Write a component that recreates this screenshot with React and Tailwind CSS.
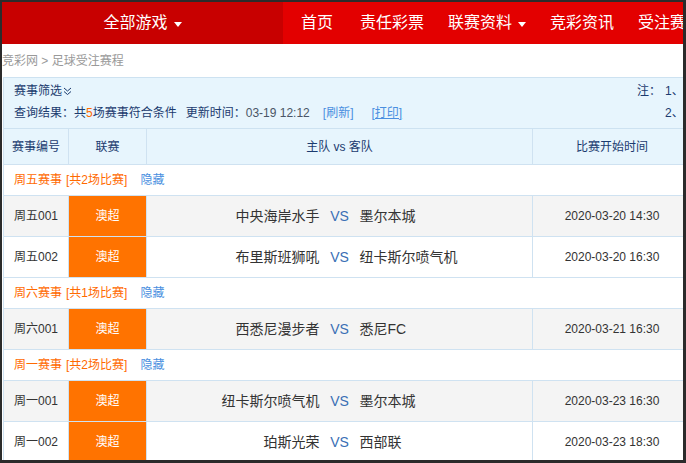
const groups = [
  {
    title: '周五赛事',
    count: 2,
    matches: [
      { code: '周五001', home: '中央海岸水手', away: '墨尔本城', time: '2020-03-20 14:30' },
      { code: '周五002', home: '布里斯班狮吼', away: '纽卡斯尔喷气机', time: '2020-03-20 16:30' },
    ],
  },
  {
    title: '周六赛事',
    count: 1,
    matches: [{ code: '周六001', home: '西悉尼漫步者', away: '悉尼FC', time: '2020-03-21 16:30' }],
  },
  {
    title: '周一赛事',
    count: 2,
    matches: [
      { code: '周一001', home: '纽卡斯尔喷气机', away: '墨尔本城', time: '2020-03-23 16:30' },
      { code: '周一002', home: '珀斯光荣', away: '西部联', time: '2020-03-23 18:30' },
    ],
  },
];

const Caret = () => (
  <span className="inline-block w-0 h-0 border-l-[4px] border-r-[4px] border-t-[5px] border-l-transparent border-r-transparent border-t-white ml-[6px] mt-[2px]" />
);

const NavItem = ({ label, caret }) => (
  <div className="flex items-center px-[12px] text-white text-[16px] whitespace-nowrap">
    {label}
    {caret && <Caret />}
  </div>
);

const MatchRow = ({ m, gray }) => (
  <div className={`flex h-[41px] border-b border-[#cfe2f1] ${gray ? 'bg-[#f4f4f4]' : 'bg-white'}`}>
    <div className="w-[65px] shrink-0 border-l border-[#cfe2f1] flex items-center justify-center text-[12px] text-[#333]">
      {m.code}
    </div>
    <div className="w-[78px] shrink-0 border-l border-[#cfe2f1] bg-[#ff7300] flex items-center justify-center text-[12px] text-white">
      澳超
    </div>
    <div className="w-[386px] shrink-0 border-l border-[#cfe2f1] flex items-center text-[14px] text-[#333]">
      <div className="flex-1 text-right whitespace-nowrap">{m.home}</div>
      <div className="w-[40px] text-center text-[#3a6fb5]">VS</div>
      <div className="flex-1 text-left whitespace-nowrap">{m.away}</div>
    </div>
    <div className="w-[160px] shrink-0 border-l border-r border-[#cfe2f1] flex items-center justify-center text-[12px] text-[#333]">
      {m.time}
    </div>
  </div>
);

export default function App() {
  return (
    <div className="w-[686px] h-[463px] bg-[#2b2b2b] pt-[2px] pl-[2px] pr-[3px] pb-[3px] font-['Liberation_Sans','Noto_Sans_CJK_SC',sans-serif]">
      <div className="w-full h-full bg-white overflow-hidden">
        <div className="w-[780px]">
          {/* top nav */}
          <div className="flex h-[42px]">
            <div className="w-[281px] shrink-0 bg-[#c80000] flex items-center justify-center text-white text-[16px]">
              全部游戏
              <Caret />
            </div>
            <div className="flex-1 bg-[#e30000] flex items-center pl-[6px]">
              <NavItem label="首页" />
              <div className="w-[3px]" />
              <NavItem label="责任彩票" />
              <NavItem label="联赛资料" caret />
              <NavItem label="竞彩资讯" />
              <NavItem label="受注赛程" />
            </div>
          </div>

          {/* breadcrumb */}
          <div className="h-[33px] flex items-center text-[12px] text-[#999]">竞彩网 &gt; 足球受注赛程</div>

          <div className="ml-[1px] w-[690px]">
            {/* filter box */}
            <div className="h-[52px] border border-[#cde2f1] bg-[#e7f5fd] flex pt-[2px] text-[12px] text-[#1b3b6f] overflow-hidden">
              <div className="w-[633px] shrink-0 pl-[10px]">
                <div className="h-[22px] flex items-center">
                  赛事筛选
                  <svg width="9" height="9" viewBox="0 0 9 9" className="ml-[1px]">
                    <path d="M1 1 L4.5 4 L8 1 M1 4.5 L4.5 7.5 L8 4.5" fill="none" stroke="#1b3b6f" strokeWidth="1" />
                  </svg>
                </div>
                <div className="h-[22px] flex items-center whitespace-nowrap">
                  查询结果：共<span className="text-[#ff6a00]">5</span>场赛事符合条件
                  <span className="ml-[9px]">更新时间：</span>
                  <span className="text-[#4a5566]">03-19 12:12</span>
                  <span className="ml-[13px] text-[#4a8fe0]">[刷新]</span>
                  <span className="ml-[18px] text-[#4a8fe0] underline">[打印]</span>
                </div>
              </div>
              <div className="flex shrink-0 whitespace-nowrap">
                <div className="h-[22px] flex items-center">注：</div>
                <div className="flex flex-col ml-[4px]">
                  <div className="h-[22px] flex items-center">1、赛程时间仅供参考</div>
                  <div className="h-[22px] flex items-center">2、以实际开赛时间为准</div>
                </div>
              </div>
            </div>

            {/* table header */}
            <div className="flex h-[36px] border-b border-[#cfe2f1] bg-[#e7f5fd] text-[12px] text-[#1b3b6f]">
              <div className="w-[65px] shrink-0 border-l border-[#cfe2f1] flex items-center justify-center">赛事编号</div>
              <div className="w-[78px] shrink-0 border-l border-[#cfe2f1] flex items-center justify-center">联赛</div>
              <div className="w-[386px] shrink-0 border-l border-[#cfe2f1] flex items-center justify-center">主队 vs 客队</div>
              <div className="w-[160px] shrink-0 border-l border-r border-[#cfe2f1] flex items-center justify-center">比赛开始时间</div>
            </div>

            {groups.map((g) => (
              <div key={g.title}>
                <div className="h-[31px] border-b border-l border-r border-[#cfe2f1] bg-white flex items-center pl-[10px] text-[12px]">
                  <span className="text-[#ff6a00]">{g.title}</span>
                  <span className="ml-[4px] text-[#ff6a00]">[共{g.count}场比赛]</span>
                  <span className="ml-[13px] text-[#4a8fe0]">隐藏</span>
                </div>
                {g.matches.map((m, i) => (
                  <MatchRow key={m.code} m={m} gray={i === 0} />
                ))}
              </div>
            ))}
          </div>
        </div>
      </div>
    </div>
  );
}
